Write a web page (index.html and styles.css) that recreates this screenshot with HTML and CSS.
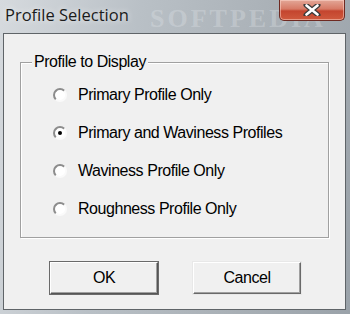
FILE: index.html
```html
<!DOCTYPE html>
<html lang="en">
  <head>
    <meta charset="UTF-8" />
    <title>Profile Selection</title>
    <link rel="stylesheet" href="styles.css">
  </head>
  <body>
    <div class="window">
      <div class="titlebar">
        <span class="title">Profile Selection</span>
        <span class="mark">SOFTPEDIA</span>
        <button class="close" aria-label="Close">
          <svg viewBox="0 0 18 12" width="18" height="12">
            <path d="M3 1 L15 11 M15 1 L3 11" stroke="#3a3a3a" stroke-width="5" stroke-linecap="round" />
            <path d="M3.5 1.5 L14.5 10.5 M14.5 1.5 L3.5 10.5" stroke="#fff" stroke-width="2.6" stroke-linecap="round" />
          </svg>
        </button>
      </div>
      <div class="client">
        <fieldset class="group">
          <legend>Profile to Display</legend>
          <label class="option"><span class="radio"></span>Primary Profile Only</label>
          <label class="option"><span class="radio checked"></span>Primary and Waviness Profiles</label>
          <label class="option"><span class="radio"></span>Waviness Profile Only</label>
          <label class="option"><span class="radio"></span>Roughness Profile Only</label>
        </fieldset>
        <div class="buttons">
          <button class="btn default">OK</button>
          <button class="btn">Cancel</button>
        </div>
      </div>
    </div>
  </body>
</html>
```
FILE: styles.css
```css
body {
    margin: 0;
    width: 350px;
    height: 314px;
    overflow: hidden;
    font-family: "Liberation Sans", Arial, sans-serif;
}
.window {
    width: 350px;
    height: 314px;
    display: flex;
    flex-direction: column;
    background: linear-gradient(100deg, #d6dade 0%, #b9c0c6 35%, #a9b0b6 70%, #9aa2a9 100%);
}
.titlebar {
    height: 33px;
    display: flex;
    align-items: flex-start;
    position: relative;
}
.title {
    font-family: "Open Sans", "Noto Sans", sans-serif;
    font-size: 16.5px;
    color: #1b1b1b;
    margin: 3px 0 0 5px;
    text-shadow: 0 0 6px rgba(255, 255, 255, 0.8);
}
.mark {
    position: absolute;
    left: 150px;
    top: 4px;
    font-family: "Liberation Serif", serif;
    font-weight: bold;
    font-size: 26px;
    letter-spacing: 3px;
    color: rgba(230, 234, 238, 0.3);
    pointer-events: none;
}
.close {
    position: absolute;
    left: 279px;
    top: 0;
    width: 66px;
    height: 21px;
    padding: 0;
    border: 1px solid #6e2a22;
    border-top: none;
    border-radius: 0 0 5px 5px;
    background: linear-gradient(#e3a797 0%, #d77a66 45%, #c4452f 55%, #cf5a3e 100%);
    box-shadow: inset 0 0 0 1px rgba(255, 220, 210, 0.5);
    display: flex;
    align-items: center;
    justify-content: center;
}
.client {
    flex: 1;
    margin: 0 4px 4px 3px;
    background: #f0f0f0;
    border: 1px solid #5f6468;
    display: flex;
    flex-direction: column;
}
.group {
    margin: 19px 0 0 16px;
    width: 309px;
    height: 185px;
    box-sizing: border-box;
    padding: 14px 0 0 0;
    border: 1px solid #a0a0a0;
    box-shadow: 1px 1px 0 #fff, inset 1px 1px 0 #fff;
    display: flex;
    flex-direction: column;
    gap: 19px;
    min-width: 0;
}
.group legend {
    font-size: 16px;
    letter-spacing: -0.45px;
    color: #000;
    padding: 0 2px;
    margin-left: 11px;
    background: #f0f0f0;
}
.option {
    display: flex;
    align-items: center;
    gap: 11px;
    height: 19px;
    margin-left: 32px;
    font-size: 16px;
    letter-spacing: -0.45px;
    color: #000;
}
.radio {
    width: 10px;
    height: 10px;
    border-radius: 50%;
    border: 2px solid;
    border-color: #8c8c8c #fafafa #fafafa #8c8c8c;
    background: #fff;
    display: flex;
    align-items: center;
    justify-content: center;
}
.radio.checked::after {
    content: "";
    width: 4px;
    height: 4px;
    border-radius: 50%;
    background: #000;
}
.buttons {
    display: flex;
    gap: 35px;
    margin: 24px 0 0 46px;
}
.btn {
    width: 108px;
    height: 32px;
    font-family: "Liberation Sans", Arial, sans-serif;
    font-size: 16px;
    letter-spacing: -0.45px;
    color: #000;
    background: #f0f0f0;
    border: 1px solid;
    border-color: #fff #696969 #696969 #fff;
    box-shadow: inset -1px -1px 0 #a0a0a0, 0 0 0 1px #e8e8e8;
    padding: 0;
}
.btn.default {
    border-color: #fff #555 #555 #fff;
    box-shadow: inset -1px -1px 0 #a0a0a0, 0 0 0 1px #6a6a6a;
}
```
